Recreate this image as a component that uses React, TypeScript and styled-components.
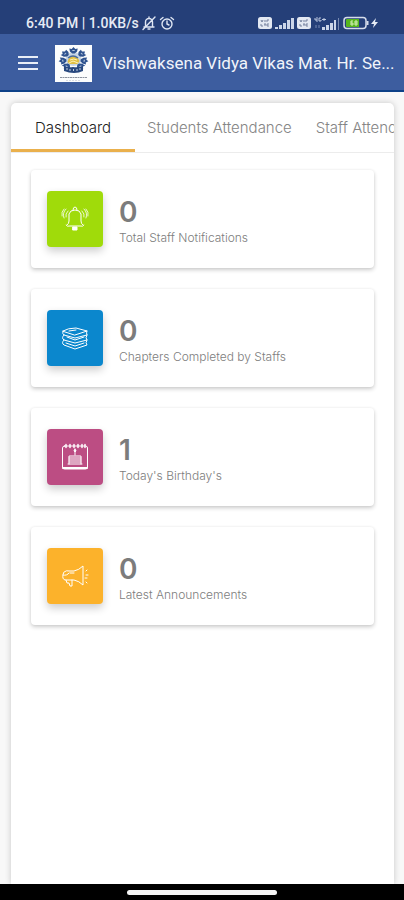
import React from "react";
import styled, { createGlobalStyle } from "styled-components";

const GlobalStyle = createGlobalStyle`
  *, *::before, *::after { box-sizing: border-box; }
  body {
    margin: 0;
    background: #f8f8f8;
    font-family: Inter, "Noto Sans", sans-serif;
  }
`;

const Screen = styled.div`
  display: flex;
  flex-direction: column;
  min-height: 100vh;
`;

const StatusBar = styled.div`
  display: flex;
  justify-content: space-between;
  align-items: center;
  height: 34px;
  padding: 12px 25px 0 26px;
  background: #253f78;
  color: #e6ebf5;
  font: 500 14px/20px Roboto, sans-serif;
`;

const StatusGroup = styled.div`
  display: flex;
  align-items: center;
  gap: 3px;
  white-space: nowrap;
`;

const AppBar = styled.header`
  display: flex;
  align-items: center;
  height: 58px;
  padding: 2px 6px 0 18px;
  background: #3d5d9f;
  border-bottom: 2px solid #0d4188;
`;

const MenuButton = styled.button`
  display: flex;
  padding: 0;
  border: 0;
  background: none;
  margin-right: 17px;
`;

const Logo = styled.svg`
  flex: none;
  margin-right: 10px;
`;

const Title = styled.h1`
  margin: 0;
  flex: 1;
  min-width: 0;
  overflow: hidden;
  text-overflow: ellipsis;
  color: #f1f4fa;
  font: 400 17px/24px Roboto, sans-serif;
  white-space: nowrap;
`;

const Panel = styled.main`
  flex: 1;
  margin: 11px 10px 0 11px;
  background: #fff;
  border-radius: 5px 5px 0 0;
  box-shadow: 0 0 6px rgba(0, 0, 0, 0.2);
`;

const Tabs = styled.div`
  display: flex;
  overflow: hidden;
  height: 50px;
  border-bottom: 1px solid #ececec;
`;

const Tab = styled.button<{ $active?: boolean }>`
  flex: none;
  padding: 4px ${(p) => (p.$active ? "24px" : "12px")} 0;
  border: 0;
  border-bottom: 3px solid ${(p) => (p.$active ? "#eab04c" : "transparent")};
  background: none;
  color: ${(p) => (p.$active ? "#222" : "#858585")};
  font: 300 15px/20px Inter, sans-serif;
  white-space: nowrap;
`;

const CardList = styled.div`
  display: flex;
  flex-direction: column;
  gap: 21px;
  padding: 17px 20px;
`;

const Card = styled.section`
  display: flex;
  align-items: center;
  gap: 16px;
  height: 98px;
  padding: 0 16px;
  background: #fff;
  border-radius: 4px;
  box-shadow: 0 2px 4px rgba(0, 0, 0, 0.2), 0 0 3px rgba(0, 0, 0, 0.05);
`;

const IconTile = styled.div<{ $color: string }>`
  flex: none;
  display: grid;
  place-items: center;
  width: 56px;
  height: 56px;
  border-radius: 4px;
  background: ${(p) => p.$color};
  box-shadow: 0 4px 8px rgba(0, 0, 0, 0.2);
`;

const StatText = styled.div`
  padding-top: 6px;
`;

const Value = styled.div`
  color: #7c7c7c;
  font-size: 28px;
  line-height: 32px;
  font-weight: 600;
`;

const Label = styled.div`
  color: #7d7d7d;
  font-size: 12px;
  line-height: 20px;
  font-weight: 300;
`;

const NavBar = styled.footer`
  display: flex;
  justify-content: center;
  align-items: center;
  height: 16px;
  background: #000;
`;

const HomeHandle = styled.div`
  width: 150px;
  height: 5px;
  border-radius: 3px;
  background: #f6f6f6;
`;

const Line = styled.svg`
  fill: none;
  stroke: #fff;
  stroke-width: 1;
  stroke-linecap: round;
  stroke-linejoin: round;
`;

const StatusIcon = styled.svg`
  flex: none;
  fill: none;
  stroke: #dfe6f3;
  stroke-width: 1.4;
  stroke-linecap: round;
`;

const MutedBell = () => (
  <StatusIcon width="14" height="16" viewBox="0 0 14 16">
    <path d="M2 12h10M3.5 12V7a3.5 3.5 0 0 1 7 0v5M7 3V2M6 14h2M1 14.5L13 2" />
  </StatusIcon>
);

const Alarm = () => (
  <StatusIcon width="16" height="16" viewBox="0 0 16 16">
    <circle cx="8" cy="9" r="5" />
    <path d="M8 6v3l2 1M1.5 4.5L4 2.5M14.5 4.5L12 2.5" />
  </StatusIcon>
);

const Sim = () => (
  <svg width="14" height="12" viewBox="0 0 14 12">
    <rect width="14" height="12" rx="2.5" fill="#e3e8f2" />
    <path d="M3 3l1 2 1-2M7 3v2M9 5V3h2M3 7v2h2M6 7h2M7 7v2M11 7H9v2h2" stroke="#6b7896" strokeWidth=".9" fill="none" />
  </svg>
);

const Bars = () => (
  <svg width="19" height="12" viewBox="0 0 19 12" fill="#cbd5e8">
    <path d="M0 10h3v2H0zM4 8h3v4H4zM8 6h3v6H8zM12 3h3v9h-3zM16 1h3v11h-3z" />
  </svg>
);

const DataBars = () => (
  <svg width="26" height="13" viewBox="0 0 26 13" fill="#cbd5e8">
    <path d="M8 10h3v3H8zM12 8h3v5h-3zM16 6h3v7h-3zM20 3h2v10h-2z" />
    <path d="M24 1h1v12h-1z" opacity=".5" />
    <path d="M1 1v2h2M3 0v5M7 1H5v3h2V3M8 2.500h4M10 1v3" stroke="#cbd5e8" strokeWidth=".9" fill="none" />
    <path d="M2 8v3M5 8v3" stroke="#7589b3" strokeWidth="1" />
  </svg>
);

const Battery = () => (
  <svg width="36" height="14" viewBox="0 0 36 14">
    <rect x="1" y="1.5" width="22" height="11" rx="3" fill="#253f78" stroke="#d5dcea" strokeWidth="1.5" />
    <path d="M4 3h12v8H4a1 1 0 0 1-1-1V4a1 1 0 0 1 1-1z" fill="#55b51d" />
    <path d="M10 5H8v4h2V7H8M14 5h-2v4h2zM12 7h2" stroke="#e2f5c8" fill="none" strokeWidth=".9" />
    <path d="M24.500 5v4" stroke="#d5dcea" strokeWidth="2" />
    <path d="M33 2l-5 6h3l-1 4 5-6h-3z" fill="#e6ebf5" />
  </svg>
);

const petals = [-140, -98, -50, 0, 50, 98, 140];

const SchoolLogo = () => (
  <Logo width="37" height="37" viewBox="0 0 37 37" role="img" aria-label="School logo">
    <rect width="37" height="37" fill="#fcfdfd" />
    <ellipse cx="18.500" cy="14" rx="8" ry="7" fill="#c6d5e6" />
    {petals.map((angle) => (
      <g key={angle} transform={`translate(18.500 14.500) scale(1.200 1) rotate(${angle}) translate(-18.500 -14.500)`}>
        <path d="M18.500 2l1.500 2 2-.5-.5 3-2 2h-2l-2-2-.5-3 2 .5z" fill="#2f538f" />
        <path d="M17.500 5.500h2" stroke="#b4c5dd" fill="none" />
      </g>
    ))}
    <path d="M12.500 17q1-5 5-6 5 0 7 5l-2 3h-8z" fill="#e1bf43" />
    <path d="M13 13q5-4 10 0" fill="none" stroke="#496b9e" strokeWidth="1.500" />
    <path d="M15 15q4-2 7 0M14 18l4-2 5 2" fill="none" stroke="#fff4b8" />
    <path d="M9 21q4 2 9 1 5 1 10-1v5q-4 2-9 2t-10-2z" fill="#29497f" />
    <path d="M12 23v2M15 24v2M18.500 24v2M22 24v2M25 23v2" stroke="#c2cee0" />
    <path d="M5 32.500h27" stroke="#8c939f" strokeDasharray="2 .5" />
    <path d="M11 35.500h15" stroke="#c5cad2" strokeWidth=".6" strokeDasharray="2 1" />
  </Logo>
);

const BellIcon = () => (
  <Line width="28" height="28" viewBox="0 0 28 28">
    <path d="M6 20q2-1 2-4V9q1-4 6-4t6 4v7q0 3 2 4M5 20q1 2 4 1h10q3 1 4-1M12 5q0-3 2-3t2 3" />
    <path d="M12 22h4v3h-4z" fill="#fff" />
    <path d="M5 4Q1 8 3 13M7 6Q4 9 5 12M3 4Q0 7 1 11M23 4q4 4 2 9M21 6q3 3 2 6M25 4q3 3 2 7" strokeWidth=".8" />
  </Line>
);

const BooksIcon = () => (
  <Line width="28" height="28" viewBox="0 0 28 28">
    <path d="M2 7q5-3 13-3l11 3-12 4zM2 7q-1 3 1 4l11 3 12-3q-1-2 0-4M8 7l7-1" />
    <path d="M3 11q-3 3 0 5l11 3 12-3q-2-2 0-5" />
    <path d="M3 16q-3 3 0 5l11 4 12-4q-2-2 0-5M5 19l9 3 9-3M6 13l8 3 9-3" />
  </Line>
);

const BirthdayIcon = () => (
  <Line width="28" height="28" viewBox="0 0 28 28">
    <rect x="1.500" y="3" width="25" height="23" rx="2" />
    <path d="M2 25h24" strokeWidth="2" />
    <path d="M5 1.500v3M9 1.500v3M13 1.500v3M17 1.500v3M21 1.500v3M24 1.500v3" strokeWidth="1.500" />
    <path d="M7 21h14M8 21v-8h12v8M8 15h12M8 17h12M8 19h12M14 12V8" />
    <path d="M14 6q-2 2 0 3 2-1 0-3" fill="#fff" />
  </Line>
);

const MegaphoneIcon = () => (
  <Line width="28" height="28" viewBox="0 0 28 28">
    <path d="M3 10q2-2 6-1h4q5-1 9-5v19q-4-4-9-5H4q-3-1-2-5zM2 13q4 1 6-2M9 11h4M5 18l1 3h2l1 3h2v-6" />
    <path d="M25 9l1-1M25 13h2M24 16h2M25 20l1 1" />
  </Line>
);

const stats = [
  { value: 0, label: "Total Staff Notifications", color: "#a0db0a", icon: <BellIcon /> },
  { value: 0, label: "Chapters Completed by Staffs", color: "#0b87cd", icon: <BooksIcon /> },
  { value: 1, label: "Today's Birthday's", color: "#bc4d83", icon: <BirthdayIcon /> },
  { value: 0, label: "Latest Announcements", color: "#fcb22b", icon: <MegaphoneIcon /> },
];

export default function App() {
  return (
    <Screen>
      <GlobalStyle />
      <StatusBar>
        <StatusGroup>
          <span>6:40 PM | 1.0KB/s</span>
          <MutedBell />
          <Alarm />
        </StatusGroup>
        <StatusGroup>
          <Sim />
          <Bars />
          <Sim />
          <DataBars />
          <Battery />
        </StatusGroup>
      </StatusBar>
      <AppBar>
        <MenuButton aria-label="Open menu">
          <svg width="20" height="16" viewBox="0 0 20 16" fill="#e9eef7">
            <path d="M0 1h20v2H0zM0 7h20v2H0zM0 13h20v2H0z" />
          </svg>
        </MenuButton>
        <SchoolLogo />
        <Title>Vishwaksena Vidya Vikas Mat. Hr. Se...</Title>
      </AppBar>
      <Panel>
        <Tabs role="tablist">
          <Tab role="tab" aria-selected="true" $active>Dashboard</Tab>
          <Tab role="tab" aria-selected="false">Students Attendance</Tab>
          <Tab role="tab" aria-selected="false">Staff Attendance</Tab>
        </Tabs>
        <CardList>
          {stats.map((stat) => (
            <Card key={stat.label}>
              <IconTile $color={stat.color}>{stat.icon}</IconTile>
              <StatText>
                <Value>{stat.value}</Value>
                <Label>{stat.label}</Label>
              </StatText>
            </Card>
          ))}
        </CardList>
      </Panel>
      <NavBar>
        <HomeHandle />
      </NavBar>
    </Screen>
  );
}
